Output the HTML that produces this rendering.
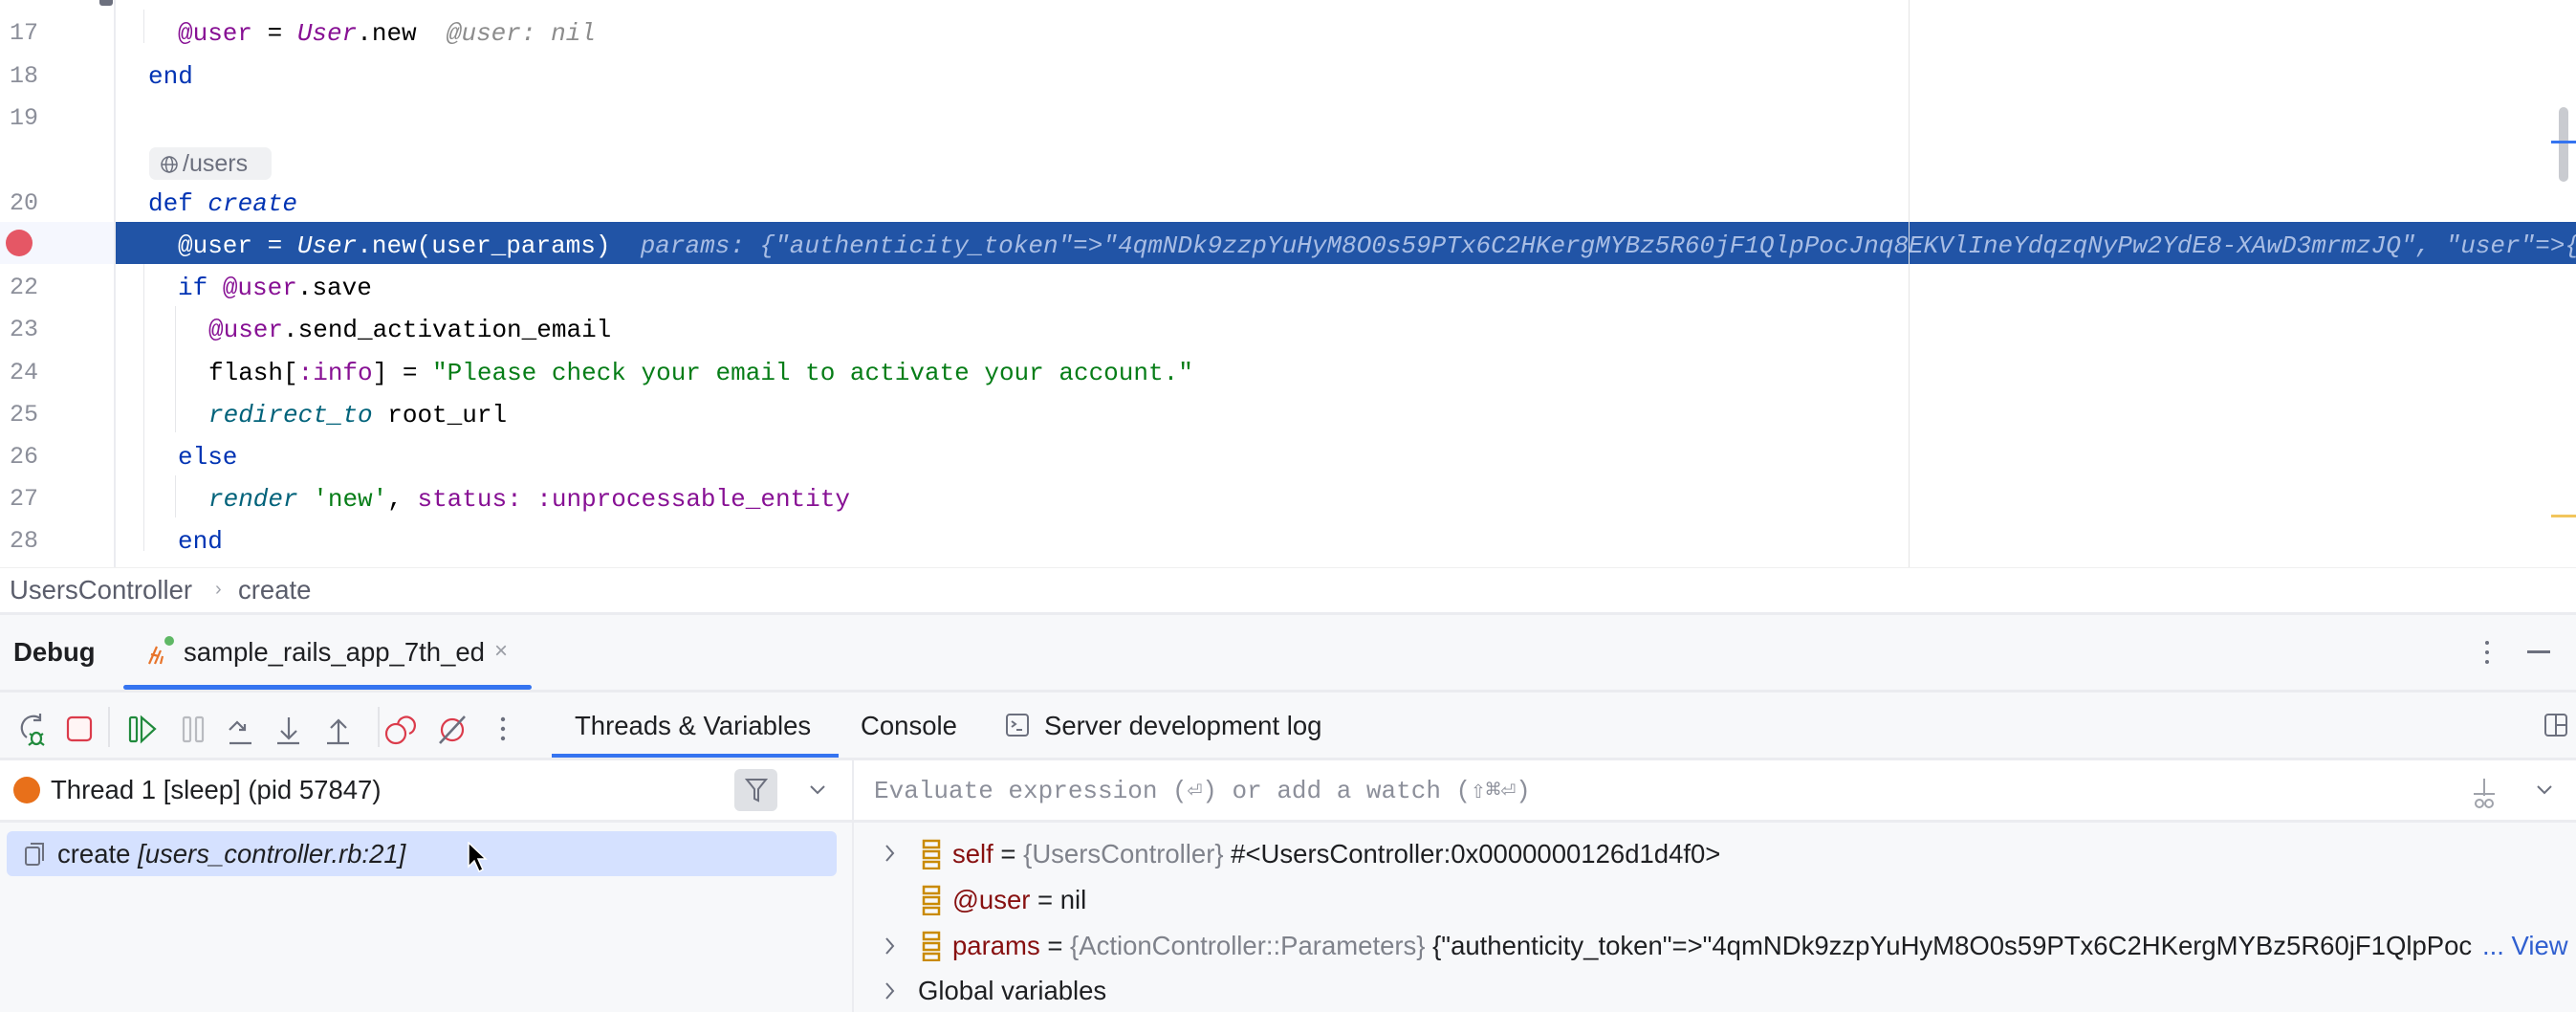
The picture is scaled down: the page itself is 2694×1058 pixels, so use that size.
<!DOCTYPE html>
<html><head><meta charset="utf-8"><style>
*{margin:0;padding:0;box-sizing:border-box}
body{width:2694px;height:1058px;overflow:hidden;background:#fff;position:relative;font-family:"Liberation Sans",sans-serif;color:#000}
.a{position:absolute;white-space:pre}
.code{font-family:"Liberation Mono",monospace;font-size:26px;line-height:44px;height:44px}
.ln{font-family:"Liberation Mono",monospace;font-size:25px;color:#8c8f9a;left:10px;line-height:44px}
.kw{color:#0033b3}.iv{color:#871094}.cl{color:#871094;font-style:italic}.fn{color:#00627a;font-style:italic}
.st{color:#067d17}.sy{color:#871094}.hint{color:#8c8c8c;font-style:italic}.dc{color:#0033b3;font-style:italic}
.ui{font-size:27.5px;line-height:30px}
.g{position:absolute;width:1px;background:#e6e7ea}
</style></head><body>
<div class="a" style="left:119px;top:0;width:2px;height:593px;background:#ebecf0"></div>
<div class="a" style="left:1996px;top:0;width:1px;height:593px;background:#e4e4e4"></div>
<div class="a" style="left:104px;top:0;width:14px;height:6px;background:#6c707e;border-radius:0 0 3px 3px"></div>
<div class="g" style="left:150px;top:10px;height:35px"></div>
<div class="g" style="left:150px;top:276px;height:300px"></div>
<div class="g" style="left:183px;top:320px;height:132px"></div>
<div class="g" style="left:183px;top:497px;height:44px"></div>

<div class="a ln" style="top:13px">17</div>
<div class="a code" style="left:186px;top:13px"><span class="iv">@user</span> = <span class="cl">User</span>.new  <span class="hint">@user: nil</span></div>
<div class="a ln" style="top:58px">18</div>
<div class="a code kw" style="left:155px;top:58px">end</div>
<div class="a ln" style="top:102px">19</div>
<div class="a" style="left:156px;top:154px;width:128px;height:34px;background:#f0f1f3;border-radius:7px"></div>
<svg class="a" style="left:167px;top:162px" width="20" height="20" viewBox="0 0 20 20" fill="none" stroke="#6c707e" stroke-width="1.5"><circle cx="10" cy="10" r="8"/><ellipse cx="10" cy="10" rx="3.5" ry="8"/><path d="M2 10h16"/></svg>
<div class="a ui" style="left:191px;top:156px;color:#6c707e;font-size:25px">/users</div>
<div class="a ln" style="top:191px">20</div>
<div class="a code" style="left:155px;top:191px"><span class="kw">def</span> <span class="dc">create</span></div>
<div class="a" style="left:0;top:232px;width:119px;height:44px;background:#f5f7fe"></div>
<div class="a" style="left:6px;top:240px;width:28px;height:28px;border-radius:50%;background:#e55765"></div>
<div class="a" style="left:121px;top:232px;width:2573px;height:44px;background:#2154a6;overflow:hidden">
<div class="a" style="left:1875px;top:0;width:1px;height:44px;background:#e4e4e4"></div>
<div class="a code" style="left:65px;top:3px;color:#fff"><span>@user</span> = <i>User</i>.new(user_params)  <span style="color:#a8bde4;font-style:italic">params: {"authenticity_token"=>"4qmNDk9zzpYuHyM8O0s59PTx6C2HKergMYBz5R60jF1QlpPocJnq8EKVlIneYdqzqNyPw2YdE8-XAwD3mrmzJQ", "user"=>{</span></div>
</div>
<div class="a ln" style="top:279px">22</div>
<div class="a code" style="left:186px;top:279px"><span class="kw">if</span> <span class="iv">@user</span>.save</div>
<div class="a ln" style="top:323px">23</div>
<div class="a code" style="left:218px;top:323px"><span class="iv">@user</span>.send_activation_email</div>
<div class="a ln" style="top:368px">24</div>
<div class="a code" style="left:218px;top:368px">flash[<span class="sy">:info</span>] = <span class="st">"Please check your email to activate your account."</span></div>
<div class="a ln" style="top:412px">25</div>
<div class="a code" style="left:218px;top:412px"><span class="fn">redirect_to</span> root_url</div>
<div class="a ln" style="top:456px">26</div>
<div class="a code kw" style="left:186px;top:456px">else</div>
<div class="a ln" style="top:500px">27</div>
<div class="a code" style="left:218px;top:500px"><span class="fn">render</span> <span class="st">'new'</span>, <span class="sy">status:</span> <span class="sy">:unprocessable_entity</span></div>
<div class="a ln" style="top:544px">28</div>
<div class="a code kw" style="left:186px;top:544px">end</div>
<div class="a" style="left:2676px;top:112px;width:10px;height:78px;background:#c9cbd0;border-radius:5px"></div>
<div class="a" style="left:2668px;top:147px;width:26px;height:3px;background:#3574f0"></div>
<div class="a" style="left:2668px;top:538px;width:26px;height:3px;background:#f2c55c"></div>
<div class="a" style="left:0;top:593px;width:2694px;height:47px;background:#fff;border-top:1px solid #f0f0f0"></div>
<div class="a ui" style="left:10px;top:602px;color:#5a5d6b">UsersController</div>
<div class="a ui" style="left:225px;top:601px;color:#a0a3ab;font-size:20px">›</div>
<div class="a ui" style="left:249px;top:602px;color:#5a5d6b">create</div>
<div class="a" style="left:0;top:640px;width:2694px;height:418px;background:#f7f8fa;border-top:3px solid #ebecf0"></div>
<div class="a ui" style="left:14px;top:667px;font-weight:bold;color:#1e1f22">Debug</div>
<svg class="a" style="left:152px;top:664px" width="32" height="34" viewBox="0 0 32 34" fill="none" stroke="#e8742b" stroke-width="2.2"><path d="M4 30 L12 12 M10 30 L16 16 M16 30 L18 22 M6 20 L14 22"/><circle cx="25" cy="6" r="5" fill="#5fb865" stroke="none"/></svg>
<div class="a ui" style="left:192px;top:667px;color:#1e1f22">sample_rails_app_7th_ed</div>
<div class="a ui" style="left:517px;top:666px;color:#9a9da5;font-size:24px">×</div>
<div class="a" style="left:129px;top:716px;width:427px;height:5px;background:#3574f0;border-radius:3px"></div>
<div class="a" style="left:0;top:721px;width:2694px;height:3px;background:#ebecf0"></div>
<div class="a" style="left:2599px;top:670px;width:4px;height:4px;border-radius:2px;background:#6c707e;box-shadow:0 10px 0 #6c707e,0 20px 0 #6c707e"></div>
<div class="a" style="left:2643px;top:680px;width:24px;height:3px;background:#6c707e"></div>
<svg class="a" style="left:14px;top:745px" width="540" height="36" viewBox="0 0 540 36" fill="none" stroke-width="2.2">
<path d="M28 6 A11 11 0 1 0 14 26" stroke="#6c707e"/><path d="M28 1 v7 h-7" stroke="#6c707e"/>
<ellipse cx="24" cy="27" rx="5" ry="6" stroke="#208a3c"/><path d="M17 22l3 2M31 22l-3 2M16 34l4-3M32 34l-4-3" stroke="#208a3c"/>
<rect x="57" y="5" width="24" height="24" rx="4" stroke="#db3b4b" fill="#fff5f5"/>
<rect x="122" y="5" width="7" height="25" rx="1.5" stroke="#208a3c"/><path d="M134 5 L148 17 L134 30 Z" stroke="#208a3c" fill="#f0f9f2"/>
<rect x="178" y="5" width="7" height="25" rx="1.5" stroke="#b9bbc0"/><rect x="191" y="5" width="7" height="25" rx="1.5" stroke="#b9bbc0"/>
<path d="M226 18 L234 10 L242 18 M242 12 v6 h-6 M226 32 h23" stroke="#6c707e"/>
<path d="M288 5 v22 M280 19 l8 8 l8-8 M276 32 h23" stroke="#6c707e"/>
<path d="M340 8 v24 M332 16 l8-8 l8 8 M328 32 h23" stroke="#6c707e"/>
<circle cx="400" cy="22" r="10" stroke="#db3b4b"/><path d="M402 12 A9 9 0 1 1 414 22" stroke="#db3b4b"/>
<circle cx="459" cy="18" r="11" stroke="#db3b4b"/><path d="M446 32 L472 4" stroke="#6c707e" stroke-width="2.6"/>
<circle cx="512" cy="7" r="2.2" fill="#6c707e" stroke="none"/><circle cx="512" cy="17" r="2.2" fill="#6c707e" stroke="none"/><circle cx="512" cy="27" r="2.2" fill="#6c707e" stroke="none"/>
</svg>
<div class="a" style="left:113px;top:739px;width:2px;height:42px;background:#e3e4e8"></div>
<div class="a" style="left:395px;top:739px;width:2px;height:42px;background:#e3e4e8"></div>
<div class="a ui" style="left:601px;top:744px;color:#1e1f22">Threads &amp; Variables</div>
<div class="a" style="left:577px;top:788px;width:300px;height:5px;background:#3574f0"></div>
<div class="a ui" style="left:900px;top:744px;color:#1e1f22">Console</div>
<svg class="a" style="left:1051px;top:745px" width="26" height="26" viewBox="0 0 26 26" fill="none" stroke="#6c707e" stroke-width="2"><rect x="2" y="2" width="22" height="22" rx="3"/><path d="M7 9l4 3-4 3M12 18h6"/></svg>
<div class="a ui" style="left:1092px;top:744px;color:#1e1f22">Server development log</div>
<svg class="a" style="left:2660px;top:745px" width="26" height="26" viewBox="0 0 26 26" fill="none" stroke="#6c707e" stroke-width="2"><rect x="2" y="2" width="22" height="22" rx="3"/><path d="M13 2v22M13 13h11"/></svg>
<div class="a" style="left:0;top:792px;width:2694px;height:3px;background:#ebecf0"></div>
<div class="a" style="left:0;top:795px;width:891px;height:63px;background:#fff"></div>
<div class="a" style="left:14px;top:812px;width:28px;height:28px;border-radius:50%;background:#e8701a"></div>
<div class="a ui" style="left:53px;top:811px;color:#1e1f22">Thread 1 [sleep] (pid 57847)</div>
<div class="a" style="left:768px;top:804px;width:45px;height:44px;background:#dfe1e5;border-radius:6px"></div>
<svg class="a" style="left:779px;top:813px" width="24" height="26" viewBox="0 0 24 26" fill="none" stroke="#6c707e" stroke-width="2"><path d="M2 2h20l-8 10v12l-4-2V12z"/></svg>
<svg class="a" style="left:846px;top:820px" width="18" height="12" viewBox="0 0 18 12" fill="none" stroke="#6c707e" stroke-width="2"><path d="M2 2l7 7 7-7"/></svg>
<div class="a" style="left:0;top:857px;width:891px;height:3px;background:#ebecf0"></div>
<div class="a" style="left:7px;top:869px;width:868px;height:47px;background:#d5e1ff;border-radius:6px"></div>
<svg class="a" style="left:25px;top:880px" width="24" height="26" viewBox="0 0 24 26" fill="none" stroke="#6c707e" stroke-width="2"><rect x="2" y="6" width="14" height="18" rx="2"/><path d="M7 2h13v18"/></svg>
<div class="a ui" style="left:60px;top:878px;color:#1e1f22">create <i>[users_controller.rb:21]</i></div>
<svg class="a" style="left:488px;top:880px" width="22" height="34" viewBox="0 0 22 34"><path d="M2 1 L2 26 L8 20 L13 31 L17 29 L12 18 L20 18 Z" fill="#000" stroke="#fff" stroke-width="1.5"/></svg>
<div class="a" style="left:891px;top:795px;width:2px;height:263px;background:#ebecf0"></div>
<div class="a" style="left:893px;top:795px;width:1801px;height:63px;background:#fff"></div>
<div class="a code" style="left:914px;top:805px;color:#8c8f9a;font-size:26px">Evaluate expression (⏎) or add a watch (⇧⌘⏎)</div>
<svg class="a" style="left:2583px;top:812px" width="30" height="36" viewBox="0 0 30 36" fill="none" stroke="#a0a3ab" stroke-width="2"><path d="M15 2v18M4 18h22"/><circle cx="10" cy="28" r="4"/><circle cx="20" cy="28" r="4"/></svg>
<svg class="a" style="left:2652px;top:820px" width="18" height="12" viewBox="0 0 18 12" fill="none" stroke="#6c707e" stroke-width="2"><path d="M2 2l7 7 7-7"/></svg>
<div class="a" style="left:893px;top:857px;width:1801px;height:3px;background:#ebecf0"></div>
<svg class="a" style="left:924px;top:880px" width="14" height="24" viewBox="0 0 14 24" fill="none" stroke="#6c707e" stroke-width="2"><path d="M3 4l7 8-7 8"/></svg>
<svg class="a" style="left:924px;top:977px" width="14" height="24" viewBox="0 0 14 24" fill="none" stroke="#6c707e" stroke-width="2"><path d="M3 4l7 8-7 8"/></svg>
<svg class="a" style="left:924px;top:1024px" width="14" height="24" viewBox="0 0 14 24" fill="none" stroke="#6c707e" stroke-width="2"><path d="M3 4l7 8-7 8"/></svg>
<svg class="a" style="left:964px;top:877px" width="20" height="32" viewBox="0 0 20 32" fill="none" stroke="#c98a00" stroke-width="2.5"><rect x="2" y="2" width="16" height="7"/><rect x="2" y="13" width="16" height="7"/><rect x="2" y="24" width="16" height="7"/></svg>
<svg class="a" style="left:964px;top:925px" width="20" height="32" viewBox="0 0 20 32" fill="none" stroke="#c98a00" stroke-width="2.5"><rect x="2" y="2" width="16" height="7"/><rect x="2" y="13" width="16" height="7"/><rect x="2" y="24" width="16" height="7"/></svg>
<svg class="a" style="left:964px;top:973px" width="20" height="32" viewBox="0 0 20 32" fill="none" stroke="#c98a00" stroke-width="2.5"><rect x="2" y="2" width="16" height="7"/><rect x="2" y="13" width="16" height="7"/><rect x="2" y="24" width="16" height="7"/></svg>
<div class="a ui" style="left:996px;top:878px;color:#1e1f22"><span style="color:#871010">self</span> = <span style="color:#7f828b">{UsersController}</span> #&lt;UsersController:0x0000000126d1d4f0&gt;</div>
<div class="a ui" style="left:996px;top:926px;color:#1e1f22"><span style="color:#871010">@user</span> = nil</div>
<div class="a ui" style="left:996px;top:974px;color:#1e1f22;width:1598px;overflow:hidden"><span style="color:#871010">params</span> = <span style="color:#7f828b">{ActionController::Parameters}</span> {"authenticity_token"=&gt;"4qmNDk9zzpYuHyM8O0s59PTx6C2HKergMYBz5R60jF1QlpPoc</div>
<div class="a ui" style="left:2596px;top:974px;color:#2f5fd0">... View</div>
<div class="a ui" style="left:960px;top:1021px;color:#1e1f22">Global variables</div>
</body></html>
